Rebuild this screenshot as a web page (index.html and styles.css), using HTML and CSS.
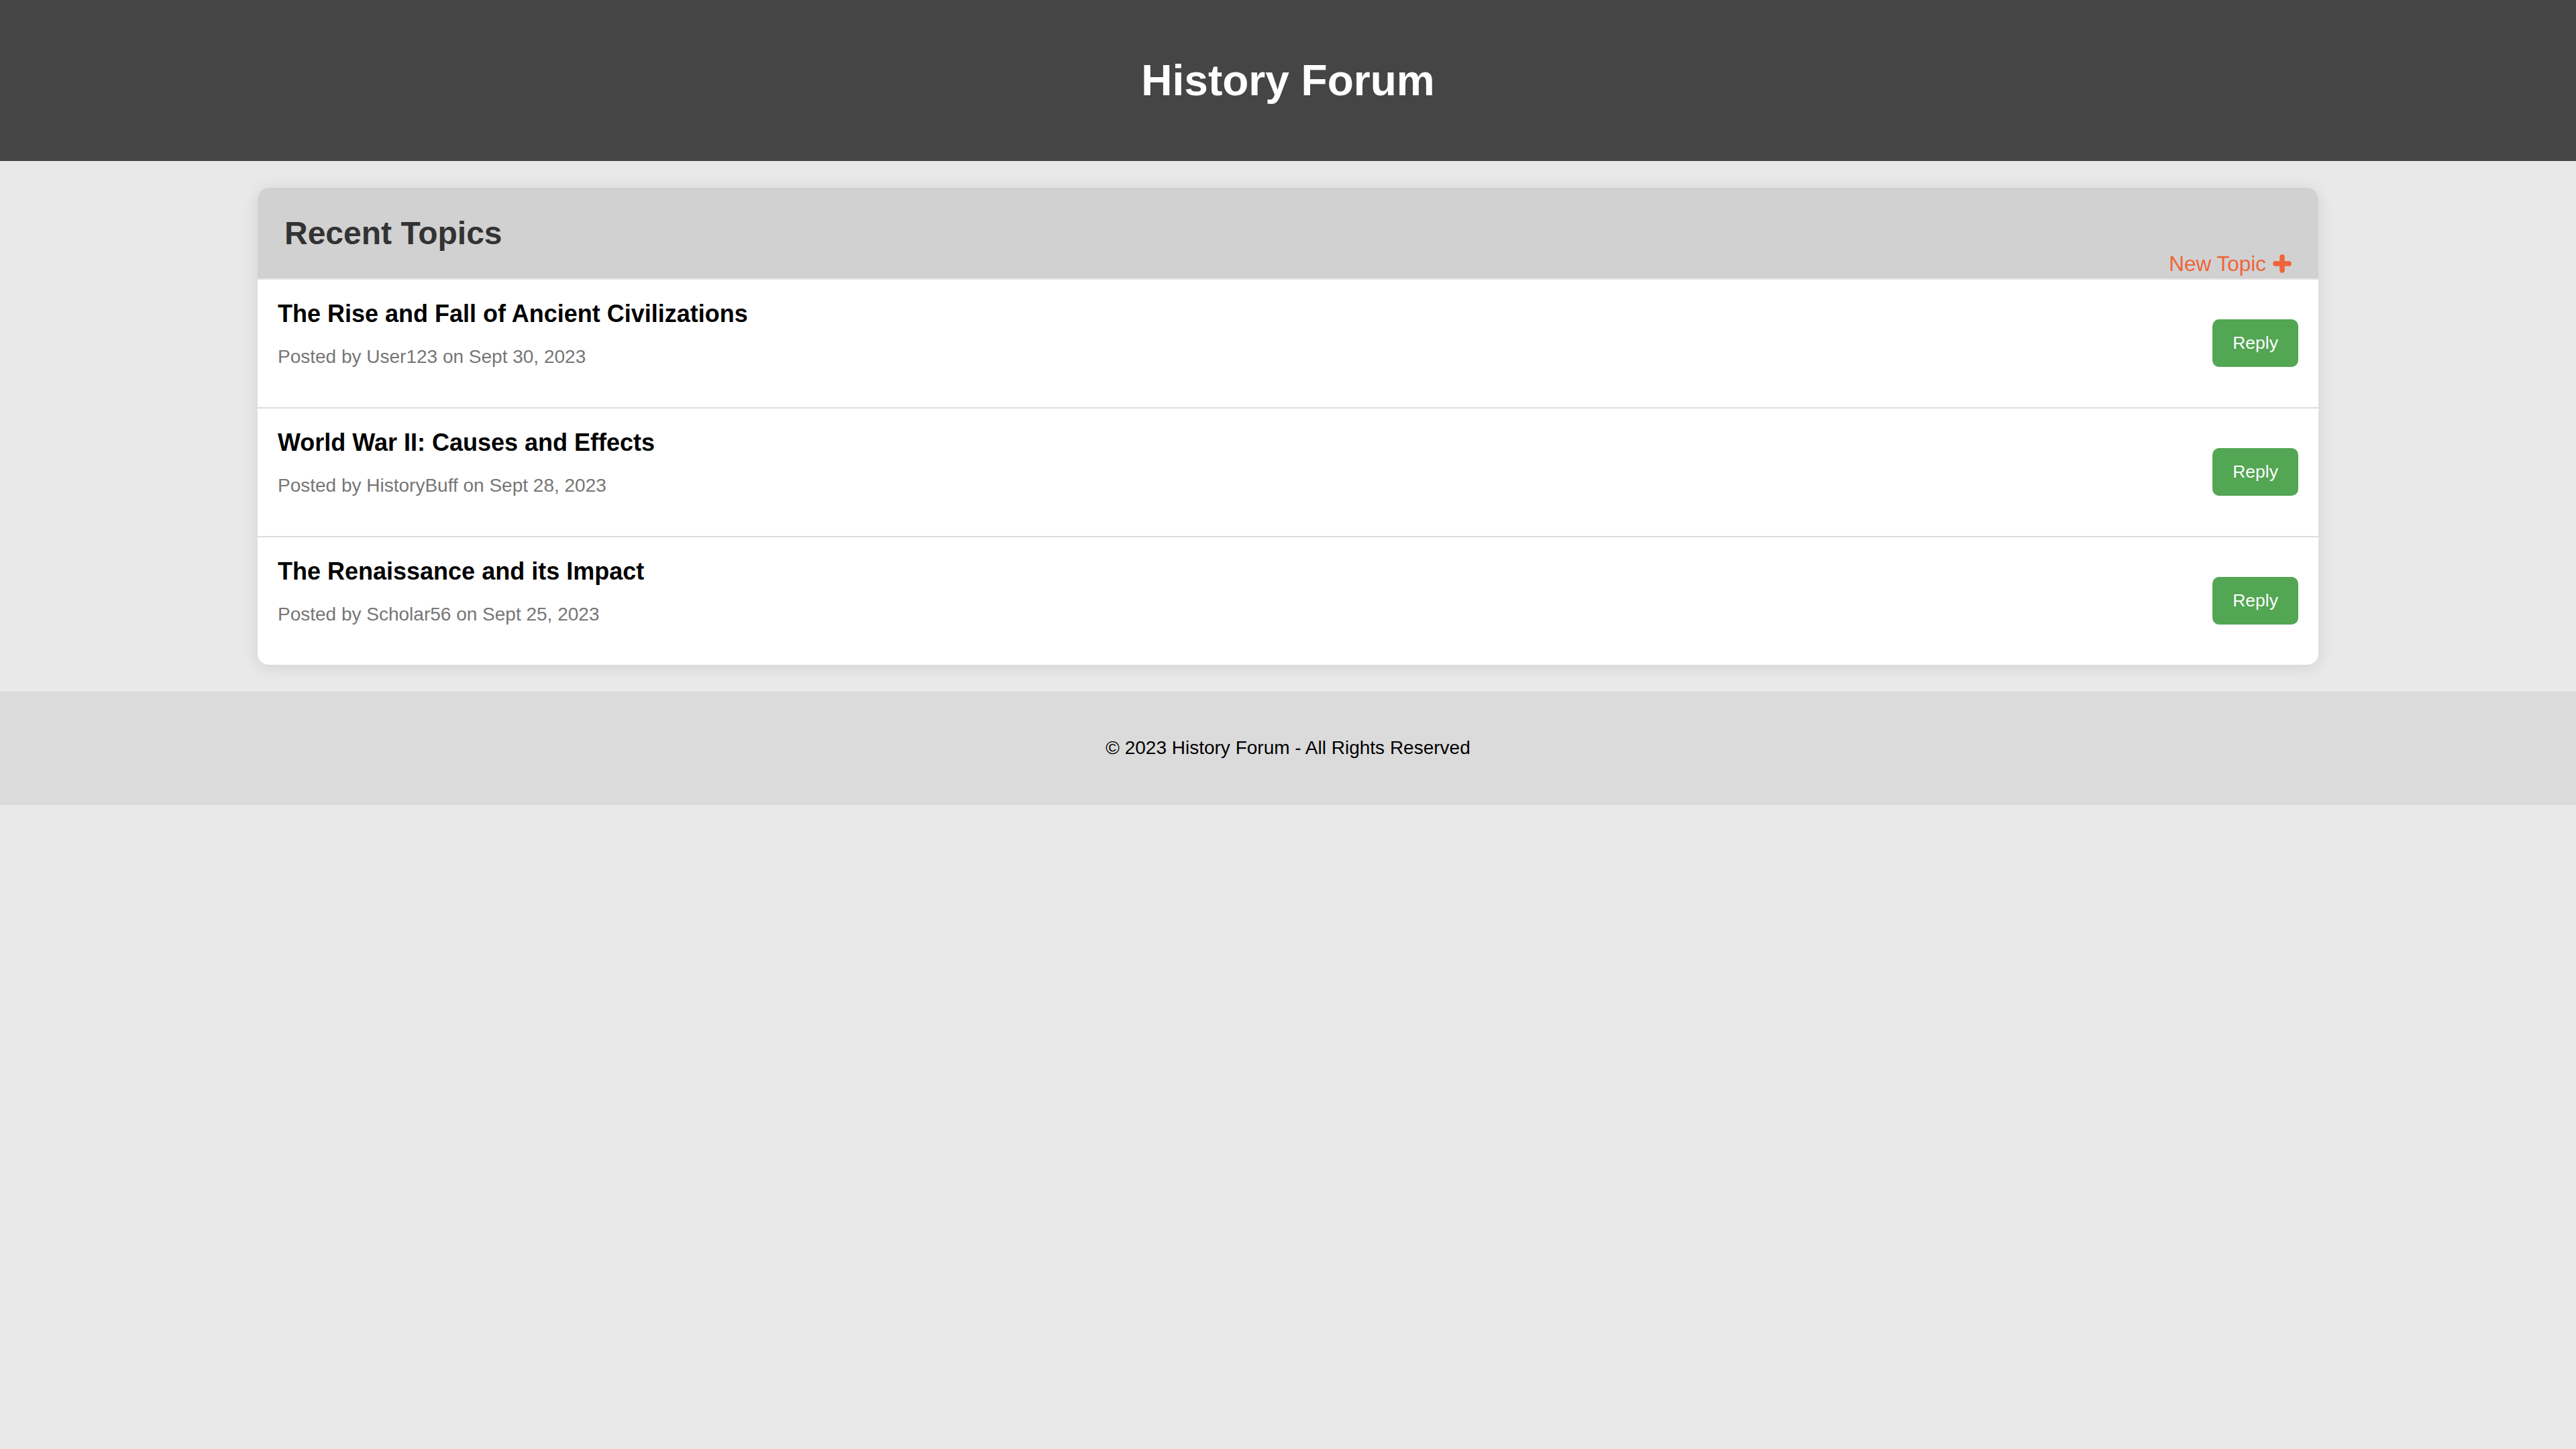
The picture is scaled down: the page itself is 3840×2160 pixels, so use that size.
FILE: index.html
```html
<!DOCTYPE html>
<html lang="en">
<head>
<meta charset="utf-8">
<title>History Forum</title>
<link rel="stylesheet" href="styles.css">
</head>
<body>
<header class="site-header">
  <h1 class="site-title">History Forum</h1>
</header>
<main class="main">
  <section class="card">
    <div class="card-head">
      <h2 class="card-title">Recent Topics</h2>
      <div class="new-topic-line">
        <a class="new-topic" href="#">New Topic
          <svg class="plus" viewBox="0 0 28 28" width="28" height="28" aria-hidden="true">
            <path d="M4 14H24M14 4V24" fill="none" stroke="currentColor" stroke-width="7.5" stroke-linecap="round"/>
          </svg>
        </a>
      </div>
    </div>
    <div class="topic">
      <div class="topic-info">
        <h3 class="topic-title">The Rise and Fall of Ancient Civilizations</h3>
        <p class="topic-meta">Posted by User123 on Sept 30, 2023</p>
      </div>
      <button class="reply">Reply</button>
    </div>
    <div class="topic">
      <div class="topic-info">
        <h3 class="topic-title">World War II: Causes and Effects</h3>
        <p class="topic-meta">Posted by HistoryBuff on Sept 28, 2023</p>
      </div>
      <button class="reply">Reply</button>
    </div>
    <div class="topic">
      <div class="topic-info">
        <h3 class="topic-title">The Renaissance and its Impact</h3>
        <p class="topic-meta">Posted by Scholar56 on Sept 25, 2023</p>
      </div>
      <button class="reply">Reply</button>
    </div>
  </section>
</main>
<footer class="site-footer">
  <p class="footer-text">© 2023 History Forum - All Rights Reserved</p>
</footer>
</body>
</html>
```

FILE: styles.css
```css
* { box-sizing: border-box; }

html, body {
  margin: 0;
  padding: 0;
}

body {
  background: #e9e9e9;
  font-family: "Liberation Sans", Arial, Helvetica, sans-serif;
  color: #000;
}

.site-header {
  background: #454545;
  height: 240px;
  display: flex;
  align-items: center;
  justify-content: center;
}

.site-title {
  margin: 0;
  color: #fff;
  font-size: 64px;
  font-weight: bold;
  line-height: 75px;
}

.main {
  padding: 40px 0;
}

.card {
  width: 80%;
  margin: 0 auto;
  background: #fff;
  border-radius: 17px;
  overflow: hidden;
  box-shadow: 0 4px 24px rgba(0, 0, 0, 0.1);
}

.card-head {
  background: #d1d1d1;
  padding: 40px 40px 4px;
  border-bottom: 2px solid #e4e4e4;
}

.card-title {
  margin: 0;
  font-size: 48px;
  line-height: 55px;
  font-weight: bold;
  color: #333;
}

.new-topic-line {
  display: flex;
  justify-content: flex-end;
  line-height: 36px;
}

.new-topic {
  display: inline-flex;
  align-items: center;
  gap: 10px;
  color: #ef6438;
  font-size: 31.5px;
  text-decoration: none;
}

.plus {
  display: block;
  width: 28px;
  height: 28px;
}

.topic {
  display: flex;
  align-items: center;
  justify-content: space-between;
  padding: 29px 30px 30px;
  border-top: 2px solid #dddddd;
}

.card-head + .topic {
  border-top: 0;
}

.topic-title {
  margin: 0 0 27px;
  font-size: 36px;
  line-height: 43px;
  font-weight: bold;
  color: #000;
}

.topic-meta {
  margin: 0 0 29px;
  font-size: 28px;
  line-height: 32px;
  color: #767676;
}

.reply {
  background: #53a653;
  color: #fff;
  border: 0;
  border-radius: 10px;
  font-family: "Liberation Sans", Arial, Helvetica, sans-serif;
  font-size: 26.5px;
  line-height: 31px;
  padding: 20px 30px;
  cursor: pointer;
}

.site-footer {
  background: #dbdbdb;
  padding: 68px 0 69px;
  text-align: center;
}

.footer-text {
  margin: 0;
  font-size: 28px;
  line-height: 32px;
  color: #000;
}
```
